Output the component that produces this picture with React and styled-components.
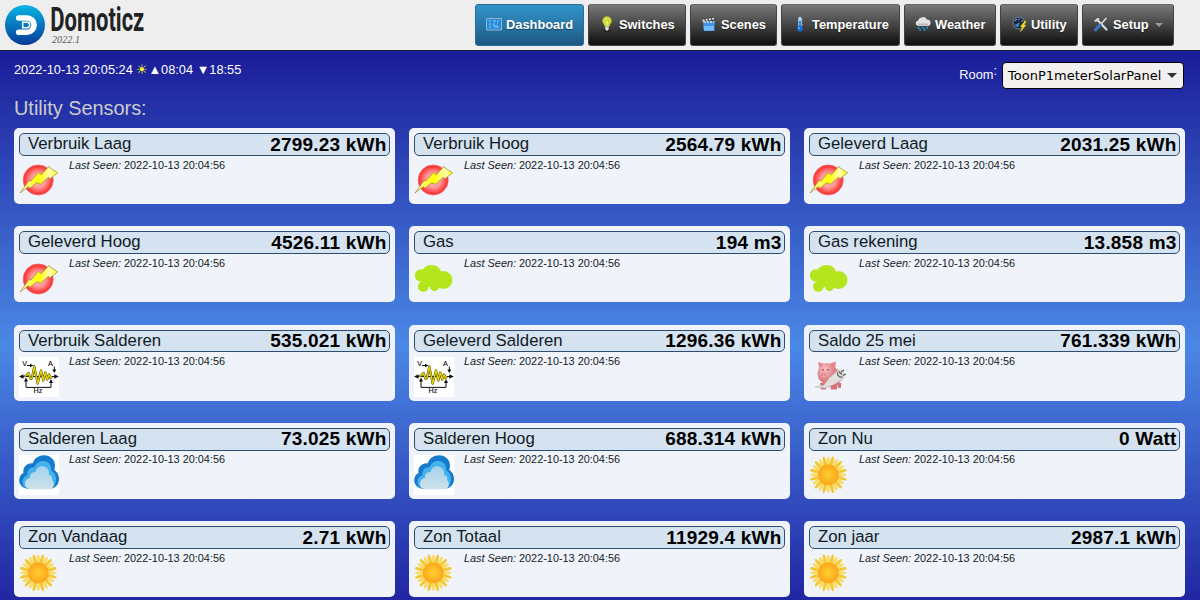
import React from "react";
import styled, { createGlobalStyle, css } from "styled-components";

const Global = createGlobalStyle`
  body { margin: 0; height: 600px; overflow: hidden; font-family: "Liberation Sans", Arial, sans-serif; font-size: 12.8px; }
  * { box-sizing: border-box; }
`;

const Page = styled.div`
  height: 600px;
  overflow: hidden;
  display: flex;
  flex-direction: column;
  background: linear-gradient(#1a1b97 48px, #4b88e6 345px, #2024a1 604px);
`;

const Header = styled.header`
  flex: none;
  height: 51px;
  padding: 4px 26px 0 5px;
  display: flex;
  justify-content: space-between;
  background: #eee;
  border-bottom: 1px solid #20202c;
`;

const Brand = styled.div`
  display: flex;
  gap: 5px;
  padding-top: 1px;
`;

const BrandText = styled.div`
  display: flex;
  flex-direction: column;
`;

const Version = styled.span`
  font: italic 10px/10px "Liberation Serif", serif;
  color: #555;
  padding-left: 2px;
  letter-spacing: 0.1px;
`;

const Nav = styled.nav`
  display: flex;
  gap: 4px;
`;

const NavButton = styled.a`
  width: ${(p) => p.$w}px;
  height: 42px;
  padding: 0 0 2px 10px;
  display: flex;
  align-items: center;
  gap: 4px;
  border-radius: 3px;
  border: 1px solid #444;
  border-top-color: #666;
  background: linear-gradient(#797979, #444 50%, #0e0e0e);
  color: #fff;
  font-size: 12.85px;
  font-weight: bold;
  white-space: nowrap;
  text-shadow: 0 1px 1px rgba(0, 0, 0, 0.4);
  ${(p) =>
    p.$active &&
    css`
      border-color: #2a6c93;
      background: linear-gradient(#3194ca, #2878a8 50%, #1d5682);
    `}
  svg { flex: none; }
`;

const Caret = styled.i`
  margin: 2px 0 0 2px;
  border: 4px solid transparent;
  border-top-color: #999;
  border-bottom: 0;
`;

const StatusBar = styled.div`
  flex: none;
  height: 38px;
  padding: 11px 16px 0 14px;
  display: flex;
  justify-content: space-between;
  color: #fff;
`;

const Clock = styled.div`
  line-height: 16px;
  white-space: pre;
`;

const SunMark = styled.span`
  color: #ffff20;
`;

const Room = styled.label`
  display: flex;
  gap: 5px;
  line-height: 26px;
`;

const Colon = styled.span`
  line-height: 17px;
  margin-left: -5px;
`;

const Select = styled.div`
  width: 182px;
  height: 27px;
  padding: 0 6px 0 5px;
  display: flex;
  align-items: center;
  justify-content: space-between;
  border: 1px solid #000;
  border-radius: 4px;
  background: #f2f1f0;
  color: #000;
  font: 13px "DejaVu Sans", sans-serif;
`;

const SelectArrow = styled.i`
  border: 5px solid transparent;
  border-top-color: #333;
  border-bottom: 0;
`;

const Title = styled.h2`
  flex: none;
  height: 39px;
  margin: 0;
  padding: 7px 14px 0;
  font-size: 19.9px;
  font-weight: normal;
  line-height: 24px;
  color: #ccc;
`;

const Grid = styled.main`
  padding: 0 14px;
  display: grid;
  grid-template-columns: repeat(3, 381px);
  grid-auto-rows: 76px;
  gap: 22.25px 14px;
`;

const Card = styled.section`
  padding: 5px;
  border-radius: 5px;
  background: #f0f4fa;
  color: #111b26;
`;

const CardHead = styled.div`
  height: 22.75px;
  padding: 0 2.5px 0 8px;
  display: flex;
  justify-content: space-between;
  border: 1px solid #2c4c70;
  border-radius: 5px;
  background: #d5e2ef;
`;

const Name = styled.span`
  font-size: 16.75px;
  line-height: 20px;
`;

const Value = styled.span`
  margin-top: -0.35px;
  font-size: 19px;
  letter-spacing: 0.2px;
  font-weight: bold;
  line-height: 22px;
  color: #000;
`;

const CardBody = styled.div`
  display: flex;
  gap: 10px;
  padding-top: 4.5px;
  svg { flex: none; }
`;

const Seen = styled.span`
  margin-top: -0.6px;
  font-size: 10.88px;
  line-height: 11px;
`;

const Logo = () => (
  <svg width="40" height="40" viewBox="0 0 40 40">
    <defs>
      <linearGradient id="lg" x2="0" y2="1">
        <stop stopColor="#07b5e5" />
        <stop offset="1" stopColor="#073a97" />
      </linearGradient>
    </defs>
    <circle cx="20" cy="20" r="20" fill="url(#lg)" />
    <path d="M13.700 10.200H22a9.900 9.900 0 0 1 0 19.800H13.700a2.800 2.800 0 0 1 0-5.600H22a4.300 4.300 0 0 0 0-8.600H13.700a2.800 2.800 0 0 1 0-5.600z" fill="#fff" />
    <path d="M17.700 17.300H22a2.700 2.700 0 0 1 0 5.400h-4.300z" fill="#0873be" stroke="#fff" strokeWidth="1.500" />
  </svg>
);

const WordMark = () => (
  <svg width="100" height="30" viewBox="0 0 100 30" overflow="visible">
    <text x=".3" y="26" fontFamily="Roboto" fontWeight="700" fontSize="32.500" fill="#222" textLength="94" lengthAdjust="spacingAndGlyphs">Domoticz</text>
  </svg>
);

const PowerIcon = () => (
  <svg width="40" height="40" viewBox="0 0 40 40">
    <defs>
      <radialGradient id="pw">
        <stop stopColor="#ffc4c4" />
        <stop offset=".5" stopColor="#ff9898" />
        <stop offset="1" stopColor="#ff2525" />
      </radialGradient>
      <linearGradient id="bolt">
        <stop stopColor="#ffffc0" />
        <stop offset=".5" stopColor="#ffff00" />
        <stop offset=".8" stopColor="#ffffb0" />
        <stop offset="1" stopColor="#ff0" />
      </linearGradient>
    </defs>
    <circle cx="19.200" cy="20" r="15" fill="url(#pw)" stroke="#e66" strokeWidth=".8" />
    <path d="M1 33L10 20.500l2 .5 7.300-8.500 3 2.300 7.700-8.600 1 1.800 7.700 4.800-7.700 6-1.500-1.600-8 7-4-1.500-6.500 5.500-1.800-1.500z" fill="url(#bolt)" stroke="#998830" strokeWidth=".7" />
  </svg>
);

const GasIcon = () => (
  <svg width="40" height="40" viewBox="0 0 40 40" fill="#b5e61d">
    <circle cx="7" cy="16.500" r="6.200" />
    <ellipse cx="17.500" cy="14.500" rx="10" ry="8.500" />
    <circle cx="29.500" cy="21" r="9" />
    <circle cx="9.300" cy="27.500" r="5.300" />
    <circle cx="20.500" cy="27.500" r="4.500" />
    <path d="M7 15h22v13H23l-5-1-5 2-5-5z" />
  </svg>
);

const WAVE = "5.5,19.5 8,18 9.5,16 11.500,22 13,21 15.300,9.500 18.700,26.500 22,13.500 24.300,23.500 26.300,15.500 28.300,22.500 30,17.500 31.500,21 33,19.500";

const WaveIcon = () => (
  <svg width="40" height="40" viewBox="0 0 40 40">
    <path fill="#fff" d="M0 0h40v40H0z" />
    <g fontFamily="Liberation Sans" fontSize="7.200" fill="#000" stroke="#000" strokeWidth=".1">
      <text x="3.300" y="8.700">V</text>
      <text x="29" y="8.700">A</text>
      <text x="14.500" y="36.200">Hz</text>
    </g>
    <path d="M3 19.500H37M8 8.500h4M35.300 9.500v4M7 22v8.400H32V24" fill="none" stroke="#111" />
    <path d="M0 19.500l4.500-2.200v4.400zM39.800 19.500l-4.500-2.200v4.400zM14.500 8.500L11 6.700v3.600zM35.300 16l-2-3.500h4zM7 20.500l-2 4h4zM32 22l-2 4h4z" fill="#111" />
    <polyline points={WAVE} fill="none" stroke="#4d4700" strokeWidth="2.300" strokeLinejoin="round" />
    <polyline points={WAVE} fill="none" stroke="#e6d500" strokeWidth="1.300" strokeLinejoin="round" />
  </svg>
);

const CloudIcon = () => (
  <svg width="40" height="40" viewBox="0 0 40 40">
    <defs>
      <linearGradient id="cl" x2="0" y2="1">
        <stop stopColor="#a5d2ec" />
        <stop offset="1" stopColor="#cde1e9" />
      </linearGradient>
    </defs>
    <path fill="#fff" d="M0 0h40v40H0z" />
    <path d="M8 33.500C3 33 0 29 .2 25 .4 21.500 2 19 4.500 18 3.500 12 8 7.500 13.800 8.200 15.500 3 20 .3 25 .3c6.500 0 11 4.500 11 10.500 0 1.500-.3 2.700-.8 4C38.500 17 40 20.500 40 24c0 5-3 9-8 9.500z" fill="#167bcf" />
    <path d="M9 34c-3.500-1-5.700-4-5.500-7.500.2-3.300 2-5.500 5-6.200C7.800 15.500 11 12 15.500 12.300 17 8 20.500 5.700 24.500 6c5 .2 8.200 4 7.700 9.500 3 1.500 4.800 4.500 4.800 8.500 0 5-2.500 9-6.500 10z" fill="#45b2ea" />
    <path d="M11 34.200C7.500 33.500 5.700 31 6 28c.3-2.700 2-4.600 5-5-.5-3.800 2-6 5.500-6 .8-3.700 3.500-5.800 6.700-5.800 4.600 0 7.300 3.600 6.800 8.300 2.500 1 3.700 3.300 3.200 5.800C36 28 35 33 31.500 34.200z" fill="url(#cl)" />
  </svg>
);

const PETALS = Array.from({ length: 24 }, (_, i) => i);

const SunIcon = () => (
  <svg width="40" height="40" viewBox="0 0 40 40">
    <defs>
      <radialGradient id="sn">
        <stop stopColor="#ffcf30" />
        <stop offset="1" stopColor="#fba51c" />
      </radialGradient>
    </defs>
    {PETALS.map((i) => (
      <ellipse key={i} cx="19.300" cy={i % 2 ? 6.2 : 7.2} rx="1.600" ry="5.400" fill={i % 2 ? "#f3c832" : "#fadb60"} transform={`rotate(${i * 15} 19.300 19.800)`} />
    ))}
    <circle cx="19.300" cy="19.800" r="10.500" fill="url(#sn)" />
  </svg>
);

const PigIcon = () => (
  <svg width="40" height="40" viewBox="0 0 40 40">
    <defs>
      <radialGradient id="pg" cx=".4" cy=".3">
        <stop stopColor="#fbc0c4" />
        <stop offset="1" stopColor="#dd7f87" />
      </radialGradient>
    </defs>
    <ellipse cx="22" cy="20" rx="10.500" ry="10" fill="#e2868e" />
    <path d="M11 26h6v6.500h-5zM21 27h7v5.500h-6zM28 26h4v5h-3z" fill="#d8707a" />
    <path d="M9 5l8 2.500-6 7zM26.800 4.500L19 7.500l7 7z" fill="#e5858d" />
    <ellipse cx="18" cy="16.500" rx="9.500" ry="10.500" fill="url(#pg)" />
    <ellipse cx="14.500" cy="17.500" rx="4" ry="3" fill="#eda0a6" />
    <path d="M14 12v1.500M19 12v1.500" stroke="#4c2225" />
    <path d="M13 17v1.500M16 17v1.500" stroke="#b85d68" />
    <path d="M6 30l9-2 5-7 6-5 3-3 4 .5 3 3.500-3 6-4 2-5 3-8 3z" fill="#e2dfdc" stroke="#b0aba8" strokeWidth=".5" />
    <path d="M28.500 15.500a4 4 0 0 0 5 4.500M32 15l3-2M34 18.500l3-1.500M29.500 14.500l3.500 3" stroke="#555" fill="none" strokeWidth="1.100" />
  </svg>
);

const NAV_ICONS = {
  dash: (
    <svg width="16" height="16" viewBox="0 0 16 16">
      <path d="M.5 2.500h15v11.500H.5z" fill="#258ad8" stroke="#98b5c9" />
      <path d="M3 5h2M3 8h2M3 11h2M7 5h3M7 8h2M8 11h5M12 5h1" stroke="#8bd5f7" strokeWidth="1.200" />
      <path d="M11.500 4v4M6 9.500h6" stroke="#56b3ea" />
    </svg>
  ),
  bulb: (
    <svg width="16" height="16" viewBox="0 0 16 16">
      <ellipse cx="8" cy="14.800" rx="4" ry="1" fill="#222" />
      <path d="M5.800 10.500C5.500 8 3.500 7.500 3.500 5a4.500 4.500 0 0 1 9 0c0 2.500-2 3-2.300 5.500z" fill="#d0dc38" stroke="#a7b12e" strokeWidth=".5" />
      <path d="M6 3.500l1.500-1.500M8 5v4" stroke="#f7ffad" />
      <path d="M6.300 10.500h3.400v3L8 15l-1.700-1.500z" fill="#ddd" />
    </svg>
  ),
  clap: (
    <svg width="16" height="16" viewBox="0 0 16 16">
      <path d="M2 5.500h11.500V15H3z" fill="#3f95eb" />
      <path d="M2.500 10H13v4.500H3z" fill="#74bcfb" />
      <path d="M1 3l12-2 .5 2-12 2z" fill="#444" />
      <path d="M1.500 4.500L13 2.500M2.500 6h11" stroke="#eee" strokeWidth="1.700" strokeDasharray="2 1.300" />
    </svg>
  ),
  temp: (
    <svg width="16" height="16" viewBox="0 0 16 16">
      <rect x="6.300" y=".8" width="3.400" height="11" rx="1.700" fill="#a9dcfb" />
      <path d="M8 5v7" stroke="#1678dd" strokeWidth="1.600" />
      <circle cx="8" cy="12.500" r="2.900" fill="#126ddc" />
      <path d="M9.500 3.500H11M9.500 6H11M9.500 8.500H11" stroke="#8fa5b4" strokeWidth=".7" />
      <circle cx="7" cy="12" r=".8" fill="#a6dcff" />
    </svg>
  ),
  rain: (
    <svg width="16" height="16" viewBox="0 0 16 16">
      <path d="M3 10a2.800 2.800 0 0 1 0-5.500 5 5 0 0 1 9-1A3.300 3.300 0 0 1 13 10z" fill="#e2e2e2" />
      <path d="M3 8.500h10" stroke="#bbb" strokeWidth="2" />
      <path d="M4 11l-.8 1.500M8.500 11l-.8 1.500M12.500 11l-.8 1.500M5.500 13l-.8 1.500M10 13l-.8 1.500" stroke="#1ca4dd" strokeWidth="1.700" />
    </svg>
  ),
  util: (
    <svg width="16" height="16" viewBox="0 0 16 16">
      <circle cx="8" cy="7" r="6" fill="#17263a" stroke="#56718e" strokeWidth="1.400" />
      <path d="M4 5l2-2M8 2.500v2M12 4l-1.500 2M4 9h3" stroke="#a1b9c7" />
      <path d="M8 7L6 11" stroke="#398bdc" strokeWidth="2" />
      <path d="M14 5l-4.500 5.500 2 .5-2 4.500 5-6-2-.5 2.500-3.500z" fill="#ffdc18" stroke="#ffdc18" strokeWidth=".6" />
    </svg>
  ),
  tools: (
    <svg width="16" height="16" viewBox="0 0 16 16">
      <path d="M4 3.500l9.500 10" stroke="#d5d8dc" strokeWidth="2.300" strokeLinecap="round" />
      <path d="M1.500 4.500A3 3 0 0 0 5.500 2" fill="none" stroke="#d5d8dc" strokeWidth="2" />
      <path d="M13.500 2L8 8" stroke="#ddd" strokeWidth="1.600" />
      <path d="M7 9l-4.500 5" stroke="#3d76bb" strokeWidth="3" strokeLinecap="round" />
    </svg>
  ),
};

const NAV = [
  ["Dashboard", 109, "dash"],
  ["Switches", 98, "bulb"],
  ["Scenes", 87, "clap"],
  ["Temperature", 119, "temp"],
  ["Weather", 92, "rain"],
  ["Utility", 78, "util"],
  ["Setup", 92, "tools"],
];

const ICONS = { power: PowerIcon, gas: GasIcon, wave: WaveIcon, cloud: CloudIcon, sun: SunIcon, pig: PigIcon };

const SENSORS = [
  ["Verbruik Laag", "2799.23 kWh", "power"],
  ["Verbruik Hoog", "2564.79 kWh", "power"],
  ["Geleverd Laag", "2031.25 kWh", "power"],
  ["Geleverd Hoog", "4526.11 kWh", "power"],
  ["Gas", "194 m3", "gas"],
  ["Gas rekening", "13.858 m3", "gas"],
  ["Verbruik Salderen", "535.021 kWh", "wave"],
  ["Geleverd Salderen", "1296.36 kWh", "wave"],
  ["Saldo 25 mei", "761.339 kWh", "pig"],
  ["Salderen Laag", "73.025 kWh", "cloud"],
  ["Salderen Hoog", "688.314 kWh", "cloud"],
  ["Zon Nu", "0 Watt", "sun"],
  ["Zon Vandaag", "2.71 kWh", "sun"],
  ["Zon Totaal", "11929.4 kWh", "sun"],
  ["Zon jaar", "2987.1 kWh", "sun"],
];

function Sensor({ name, value, icon }) {
  const Icon = ICONS[icon];
  return (
    <Card>
      <CardHead>
        <Name>{name}</Name>
        <Value>{value}</Value>
      </CardHead>
      <CardBody>
        <Icon />
        <Seen>
          <em>Last Seen:</em> 2022-10-13 20:04:56
        </Seen>
      </CardBody>
    </Card>
  );
}

export default function App() {
  return (
    <Page>
      <Global />
      <Header>
        <Brand>
          <Logo />
          <BrandText>
            <WordMark />
            <Version>2022.1</Version>
          </BrandText>
        </Brand>
        <Nav>
          {NAV.map(([label, w, icon]) => (
            <NavButton key={label} $w={w} $active={label === "Dashboard"}>
              {NAV_ICONS[icon]}
              {label}
              {label === "Setup" && <Caret />}
            </NavButton>
          ))}
        </Nav>
      </Header>
      <StatusBar>
        <Clock>
          2022-10-13 20:05:24 <SunMark>☀</SunMark>▲08:04 ▼18:55
        </Clock>
        <Room>
          Room<Colon>:</Colon>
          <Select>
            ToonP1meterSolarPanel
            <SelectArrow />
          </Select>
        </Room>
      </StatusBar>
      <Title>Utility Sensors:</Title>
      <Grid>
        {SENSORS.map(([name, value, icon]) => (
          <Sensor key={name} name={name} value={value} icon={icon} />
        ))}
      </Grid>
    </Page>
  );
}
